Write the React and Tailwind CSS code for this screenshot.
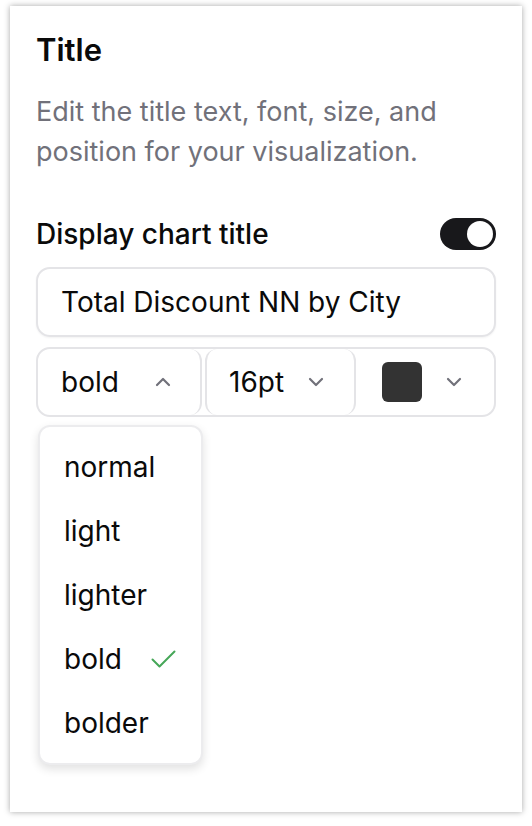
import React from "react";

function Chevron({ up = false }) {
  return (
    <svg width="16" height="10" viewBox="0 0 16 10" fill="none" stroke="#71717a" strokeWidth="2.2" strokeLinecap="round" strokeLinejoin="round">
      {up ? <path d="M2 8l6-6 6 6" /> : <path d="M2 2l6 6 6-6" />}
    </svg>
  );
}

function Check() {
  return (
    <svg width="25" height="18" viewBox="0 0 25 18" fill="none" stroke="#46a758" strokeWidth="2" strokeLinecap="round" strokeLinejoin="round">
      <path d="M1.5 9.5l7 7L23.5 1.5" />
    </svg>
  );
}

const weights = ["normal", "light", "lighter", "bold", "bolder"];

export default function App() {
  return (
    <div className="w-[532px] h-[826px] bg-white pt-[6px] pl-[10px]" style={{ fontFamily: "Inter, 'Noto Sans', sans-serif" }}>
      <div className="w-[512px] h-[806px] bg-white shadow-[0_0_6px_rgba(0,0,0,0.35)] px-[26px] pt-[24px] relative">
        <h2 className="text-[31px] leading-[40px] font-semibold text-[#0a0a0a]">Title</h2>
        <p className="mt-[22px] text-[27px] leading-[40px] text-[#71717a]">
          Edit the title text, font, size, and position for your visualization.
        </p>
        <div className="mt-[44px] flex items-center justify-between">
          <span className="text-[28px] leading-[36px] font-medium text-[#0a0a0a]">Display chart title</span>
          <div className="w-[56px] h-[32px] rounded-full bg-[#18181b] flex items-center justify-end pr-[3px]">
            <div className="w-[26px] h-[26px] rounded-full bg-white" />
          </div>
        </div>
        <div className="mt-[15px] h-[70px] rounded-[14px] border-2 border-[#e4e4e7] flex items-center px-[23px] text-[28px] text-[#0a0a0a] shadow-[0_1px_2px_rgba(0,0,0,0.05)]">
          Total Discount NN by City
        </div>
        <div className="mt-[10px] h-[70px] rounded-[14px] border-2 border-[#e4e4e7] flex text-[28px] text-[#0a0a0a]">
          <div className="w-[164px] rounded-[12px] border-r-2 border-[#e4e4e7] flex items-center pl-[23px] pr-[29px]">
            <span>bold</span>
            <span className="ml-auto flex"><Chevron up /></span>
          </div>
          <div className="ml-[3px] w-[151px] rounded-[12px] border-x-2 border-[#e4e4e7] flex items-center pl-[22px] pr-[30px]">
            <span>16pt</span>
            <span className="ml-auto flex"><Chevron /></span>
          </div>
          <div className="flex-1 flex items-center pl-[26px] pr-[32px]">
            <div className="w-[40px] h-[40px] rounded-[6px] bg-[#333333]" />
            <span className="ml-auto flex"><Chevron /></span>
          </div>
        </div>
        <div className="mt-[8px] ml-[2px] w-[165px] rounded-[12px] border-2 border-[#ececee] bg-white shadow-[0_4px_10px_rgba(0,0,0,0.12)] py-[8px]">
          {weights.map((w) => (
            <div key={w} className="h-[64px] flex items-center pl-[24px] gap-[29px] text-[28px] text-[#0a0a0a]">
              <span>{w}</span>
              {w === "bold" && <Check />}
            </div>
          ))}
        </div>
      </div>
    </div>
  );
}
